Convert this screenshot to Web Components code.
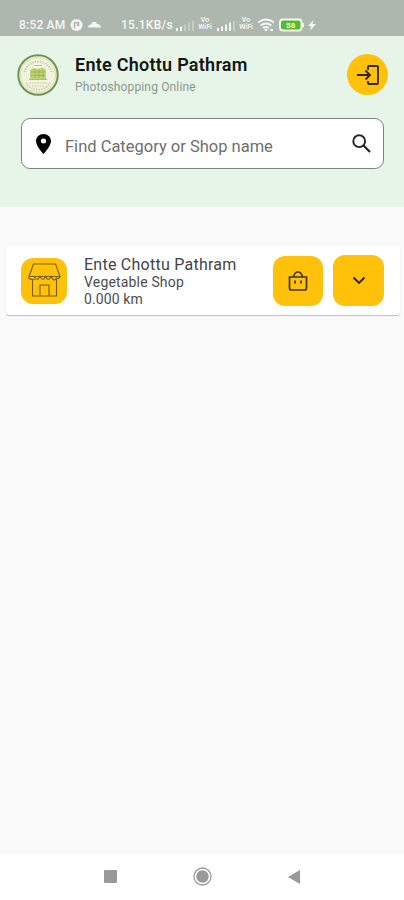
<!DOCTYPE html>
<html lang="en"><head><meta charset="utf-8"><title>Ente Chottu Pathram</title>
<style>html,body{margin:0;height:100%;background:#fafafa;font-family:Roboto,"Liberation Sans",sans-serif}</style></head>
<body><shop-app></shop-app>
<script>
const define = (name, html) => customElements.define(name, class extends HTMLElement {
  constructor() {
    super();
    this.attachShadow({ mode: 'open' }).innerHTML =
      '<style>*{box-sizing:border-box}svg{display:block;flex:none}</style>' + html;
  }
});

define('status-bar', `<style>
:host{display:flex;height:36px;background:#adb7ae;color:#f4f7f4;padding:13px 0 0 19px;font-size:12px;font-weight:500;line-height:24px;white-space:nowrap}
.t{width:51px;letter-spacing:.2px}.s{width:54px;margin-left:20px;letter-spacing:.25px}
.v{width:16px;margin:0 3px 0 3px;font-size:7px;line-height:7px;padding-top:4px;text-align:center;font-weight:600}
svg{margin-top:4px}
</style>
<span class="t">8:52 AM</span>
<svg width="13" height="16" viewBox="0 0 13 16"><circle cx="6.5" cy="8" r="6" fill="#f4f7f4"/><path d="M4.500 11.500V5.700h4v2.600H6.500" fill="none" stroke="#adb7ae" stroke-width="1.500"/></svg>
<svg style="margin-left:5px" width="13" height="16" viewBox="0 0 13 16"><path d="M0 10.500c0-2 1.500-3 3-3C4 4 8 4 9 7c2 0 4 1.500 4 3.500z" fill="#f4f7f4"/></svg>
<span class="s">15.1KB/s</span>
<svg width="19" height="16" viewBox="0 0 19 16"><path d="M1 11h2v3H1zM5 9.500h2V14H5z" fill="#f4f7f4"/><path d="M9 7.500h2V14H9zM13 5.500h2V14h-2zM17 4h2v10h-2z" fill="#c5cec5"/></svg>
<span class="v">Vo<br>WiFi</span>
<svg width="19" height="16" viewBox="0 0 19 16"><path d="M1 11h2v3H1zM5 9.500h2V14H5zM9 7.500h2V14H9zM13 5.500h2V14h-2z" fill="#f4f7f4"/><path d="M17 4h2v10h-2z" fill="#c5cec5"/></svg>
<span class="v">Vo<br>WiFi</span>
<svg width="18" height="16" viewBox="0 0 18 16"><path d="M1 5.500q8-6 16 0M3.500 8.500q5.500-4 11 0M6 11q3-2 6 0" fill="none" stroke="#f4f7f4" stroke-width="1.800"/><path d="M7 12.500q2-1.500 4 0l-2 2zM13 12h3v2h-3z" fill="#f4f7f4"/></svg>
<svg style="margin-left:4px" width="25" height="16" viewBox="0 0 25 16"><rect x="1" y="2.500" width="21.500" height="11" rx="3" fill="#55bc27" stroke="#f4f7f4" stroke-width="2"/><path d="M23 6h2v4h-2z" fill="#f4f7f4"/><text x="11.700" y="10.900" font-size="8" font-weight="700" fill="#f4f7f4" text-anchor="middle">58</text></svg>
<svg style="margin-left:4px" width="8" height="16" viewBox="0 0 8 16"><path d="M5.500 3L0 9h3l-1 4.500L8 7H4.500z" fill="#f4f7f4"/></svg>`);

define('brand-logo', `<style>:host{display:block;width:42px;height:42px}</style>
<svg width="42" height="42" viewBox="0 0 42 42"><circle cx="21" cy="21" r="19.700" fill="#f2f3de" stroke="#70924b" stroke-width="2"/><circle cx="21" cy="21" r="17.500" fill="none" stroke="#d4dfb5"/><path d="M7.500 18a14 14 0 0127 0M9 29a14 14 0 0024 0" fill="none" stroke="#c5cdab" stroke-width="2" stroke-dasharray="1.300 1.200"/><path d="M13 16l3-2 5 1 5-1.500 3 2.500v9H13z" fill="#bfd278"/><path d="M12 25.500h18M14 18h14M14 21.500h14M18 15v9M22 15v9M26 16v8" stroke="#94b448" stroke-width=".8"/><path d="M12 29h18M15 32h12" stroke="#cbcfaf" stroke-width="1" stroke-dasharray="2 .7"/><path d="M17 11.500h8" stroke="#bac4a0" stroke-width="1"/></svg>`);

define('round-action', `<style>:host{display:grid;place-items:center;width:41px;height:41px;border-radius:50%;background:#ffc10a}</style>
<svg width="22" height="20" viewBox="0 0 22 20"><path d="M0 10h12.500M8.500 5.500L13 10l-4.500 4.500M11 5V2q0-1 1-1h8q1 0 1 1v16q0 1-1 1h-8q-1 0-1-1v-2" fill="none" stroke="#30270c" stroke-width="1.800"/></svg>`);

define('search-field', `<style>
:host{display:flex;align-items:center;height:51px;border:1px solid #7d857e;border-radius:9px;background:#fff;padding:0 12px 0 14px;color:#6e6e6e;font-size:16.500px}
.q{flex:1;margin-left:14px;padding-top:5px;white-space:nowrap}
</style>
<svg width="15" height="20" viewBox="0 0 14 20" preserveAspectRatio="none"><path fill-rule="evenodd" d="M7 0C3.100 0 0 3.100 0 7c0 5.200 7 13 7 13s7-7.800 7-13c0-3.900-3.100-7-7-7zm0 4.500a2.500 2.500 0 110 5 2.500 2.500 0 010-5z" fill="#000"/></svg>
<span class="q"><slot></slot></span>
<svg style="margin-top:-1px" width="19" height="19" viewBox="0 0 19 19"><circle cx="7.200" cy="7.200" r="5.900" fill="none" stroke="#242424" stroke-width="1.900"/><path d="M11.500 11.500l6.500 6.500" stroke="#242424" stroke-width="2.100"/></svg>`);

define('app-header', `<style>
:host{display:block;height:171px;background:#e7f5e8;padding:18px 16px 0 17px}
.top{display:flex;height:64px}.copy{flex:1;margin-left:16px;white-space:nowrap}
.name{font-size:18px;line-height:22px;font-weight:600;color:#121512;letter-spacing:.26px}
.sub{font-size:12px;line-height:16px;margin-top:3px;color:#8a958b;letter-spacing:.15px}
search-field{margin:0 4px}
</style><div class="top"><brand-logo></brand-logo><div class="copy"><div class="name">Ente Chottu Pathram</div><div class="sub">Photoshopping Online</div></div><round-action></round-action></div>
<search-field>Find Category or Shop name</search-field>`);

define('icon-tile', `<style>:host{display:grid;place-items:center;flex:none;width:var(--size);height:var(--size);border-radius:12px;background:#ffc10a}</style><slot></slot>`);

define('shop-card', `<style>
:host{display:flex;align-items:center;height:69px;margin:39px 4px 0 6px;padding:0 16px 0 15px;background:#fff;border-radius:3px;box-shadow:0 1px 1px #bdbdbd}
.copy{flex:1;margin-left:17px;padding-top:2px;color:#4d4d4d;white-space:nowrap;font-size:14px;line-height:17px}
.name{font-size:16px;line-height:19px;color:#444;letter-spacing:.25px}
.kind{letter-spacing:.17px}.km{letter-spacing:.1px}
</style>
<icon-tile style="--size:46px"><svg style="margin-top:-2px" width="34" height="34" viewBox="0 0 34 34" fill="none" stroke="#795e0e" stroke-width="1.100"><path d="M6.500 1h22L33 13.500H2zM2 13.500v2q3 1.500 5.500 1M5.500 16v17h24V16M13 33V22h9v11M7 13.500q3 6 6 0 3 6 5.500 0 3 6 5.500 0 3 6 5.500 1.500 2.500 1.500 3.500-1.500"/></svg></icon-tile>
<div class="copy"><div class="name"><slot></slot></div><div class="kind">Vegetable Shop</div><div class="km">0.000 km</div></div>
<icon-tile style="--size:50px"><svg width="20" height="22" viewBox="0 0 20 22" fill="none" stroke="#443407" stroke-width="1.700"><path d="M1.500 7h17v11q0 2-2 2h-13q-2 0-2-2zM5.500 7q1-5 4.500-5t4.500 5M7 10.500v3M13 10.500v3"/></svg></icon-tile>
<icon-tile style="--size:51px;margin-left:10px"><svg width="14" height="9" viewBox="0 0 14 9"><path d="M1.500 1.500L7 7l5.500-5.500" fill="none" stroke="#302505" stroke-width="1.900"/></svg></icon-tile>`);

define('system-nav', `<style>:host{display:flex;align-items:center;height:46px;background:#fff;padding:0 0 1px 104px}</style>
<svg width="13" height="13"><rect width="13" height="13" rx="1" fill="#999"/></svg>
<svg style="margin-left:76px" width="19" height="19"><circle cx="9.500" cy="9.500" r="8.500" fill="none" stroke="#999" stroke-width="1.300"/><circle cx="9.500" cy="9.500" r="6.200" fill="#999"/></svg>
<svg style="margin-left:76px" width="12" height="14"><path d="M12 0v14L0 7z" fill="#999"/></svg>`);

define('shop-app', `<style>:host{display:flex;flex-direction:column;height:900px;background:#fafafa}
app-header,system-nav,status-bar,shop-card{flex:none}system-nav{margin-top:auto}</style>
<status-bar></status-bar><app-header></app-header><shop-card>Ente Chottu Pathram</shop-card><system-nav></system-nav>`);
</script></body></html>
